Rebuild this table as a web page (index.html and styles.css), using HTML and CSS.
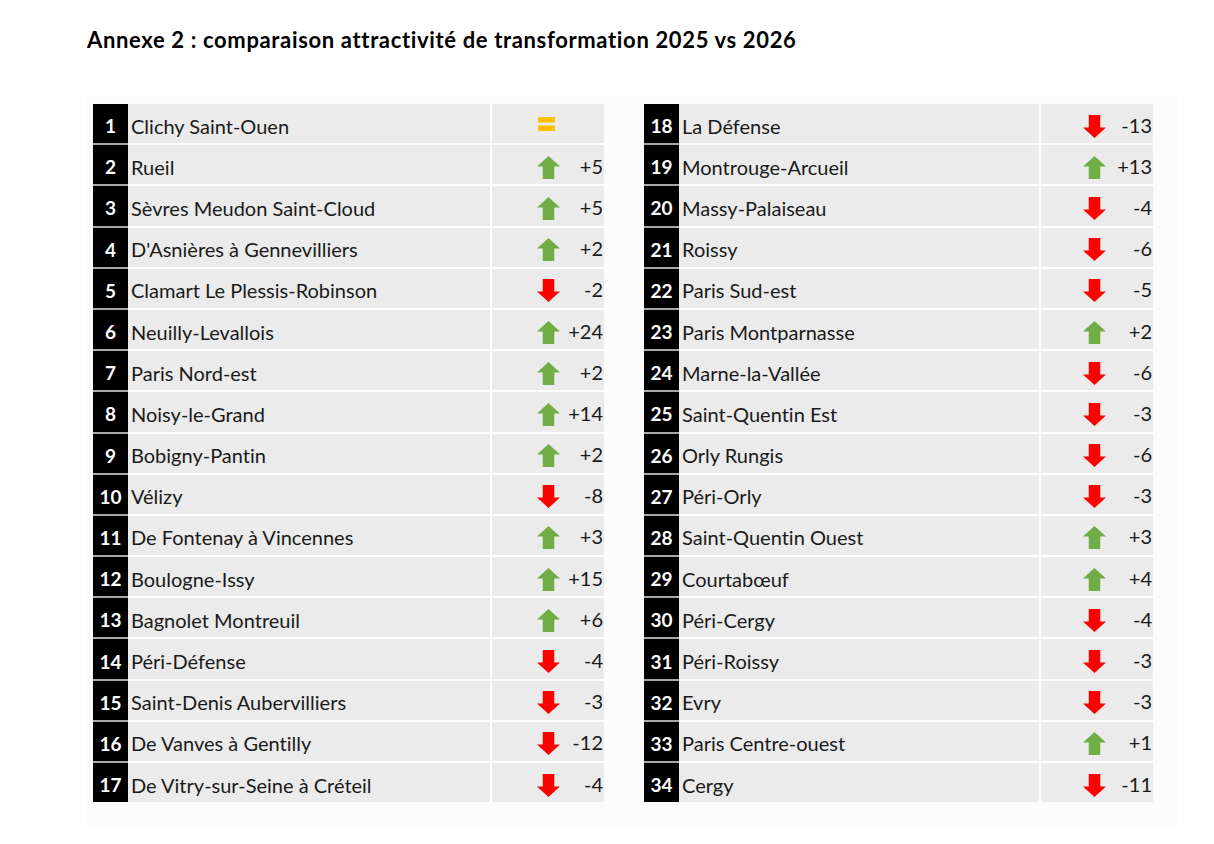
FILE: index.html
```html
<!DOCTYPE html>
<html lang="fr">
<head>
<meta charset="utf-8">
<title>Annexe 2</title>
<link rel="stylesheet" href="styles.css">
</head>
<body>
<h1 class="title">Annexe 2 : comparaison attractivité de transformation 2025 vs 2026</h1>
<svg width="0" height="0" class="defs">
  <defs>
    <symbol id="up" viewBox="0 0 24 24"><path d="M12 0 L24 11 H18 V24 H6 V11 H0 Z" fill="#70ad47"/></symbol>
    <symbol id="down" viewBox="0 0 24 24"><path d="M12 24 L24 13 H18 V0 H6 V13 H0 Z" fill="#ff0000"/></symbol>
    <symbol id="eq" viewBox="0 0 18 16"><rect x="0" y="0" width="18" height="6" fill="#ffc000"/><rect x="0" y="9" width="18" height="6" fill="#ffc000"/></symbol>
  </defs>
</svg>
<div class="panel">
  <div class="table">
    <div class="row"><div class="rank">1</div><div class="name">Clichy Saint-Ouen</div><div class="change"><svg class="eq"><use href="#eq"/></svg><span class="val"></span></div></div>
    <div class="row"><div class="rank">2</div><div class="name">Rueil</div><div class="change"><svg class="arrow"><use href="#up"/></svg><span class="val">+5</span></div></div>
    <div class="row"><div class="rank">3</div><div class="name">Sèvres Meudon Saint-Cloud</div><div class="change"><svg class="arrow"><use href="#up"/></svg><span class="val">+5</span></div></div>
    <div class="row"><div class="rank">4</div><div class="name">D'Asnières à Gennevilliers</div><div class="change"><svg class="arrow"><use href="#up"/></svg><span class="val">+2</span></div></div>
    <div class="row"><div class="rank">5</div><div class="name">Clamart Le Plessis-Robinson</div><div class="change"><svg class="arrow"><use href="#down"/></svg><span class="val">-2</span></div></div>
    <div class="row"><div class="rank">6</div><div class="name">Neuilly-Levallois</div><div class="change"><svg class="arrow"><use href="#up"/></svg><span class="val">+24</span></div></div>
    <div class="row"><div class="rank">7</div><div class="name">Paris Nord-est</div><div class="change"><svg class="arrow"><use href="#up"/></svg><span class="val">+2</span></div></div>
    <div class="row"><div class="rank">8</div><div class="name">Noisy-le-Grand</div><div class="change"><svg class="arrow"><use href="#up"/></svg><span class="val">+14</span></div></div>
    <div class="row"><div class="rank">9</div><div class="name">Bobigny-Pantin</div><div class="change"><svg class="arrow"><use href="#up"/></svg><span class="val">+2</span></div></div>
    <div class="row"><div class="rank">10</div><div class="name">Vélizy</div><div class="change"><svg class="arrow"><use href="#down"/></svg><span class="val">-8</span></div></div>
    <div class="row"><div class="rank">11</div><div class="name">De Fontenay à Vincennes</div><div class="change"><svg class="arrow"><use href="#up"/></svg><span class="val">+3</span></div></div>
    <div class="row"><div class="rank">12</div><div class="name">Boulogne-Issy</div><div class="change"><svg class="arrow"><use href="#up"/></svg><span class="val">+15</span></div></div>
    <div class="row"><div class="rank">13</div><div class="name">Bagnolet Montreuil</div><div class="change"><svg class="arrow"><use href="#up"/></svg><span class="val">+6</span></div></div>
    <div class="row"><div class="rank">14</div><div class="name">Péri-Défense</div><div class="change"><svg class="arrow"><use href="#down"/></svg><span class="val">-4</span></div></div>
    <div class="row"><div class="rank">15</div><div class="name">Saint-Denis Aubervilliers</div><div class="change"><svg class="arrow"><use href="#down"/></svg><span class="val">-3</span></div></div>
    <div class="row"><div class="rank">16</div><div class="name">De Vanves à Gentilly</div><div class="change"><svg class="arrow"><use href="#down"/></svg><span class="val">-12</span></div></div>
    <div class="row"><div class="rank">17</div><div class="name">De Vitry-sur-Seine à Créteil</div><div class="change"><svg class="arrow"><use href="#down"/></svg><span class="val">-4</span></div></div>
  </div>
  <div class="table">
    <div class="row"><div class="rank">18</div><div class="name">La Défense</div><div class="change"><svg class="arrow"><use href="#down"/></svg><span class="val">-13</span></div></div>
    <div class="row"><div class="rank">19</div><div class="name">Montrouge-Arcueil</div><div class="change"><svg class="arrow"><use href="#up"/></svg><span class="val">+13</span></div></div>
    <div class="row"><div class="rank">20</div><div class="name">Massy-Palaiseau</div><div class="change"><svg class="arrow"><use href="#down"/></svg><span class="val">-4</span></div></div>
    <div class="row"><div class="rank">21</div><div class="name">Roissy</div><div class="change"><svg class="arrow"><use href="#down"/></svg><span class="val">-6</span></div></div>
    <div class="row"><div class="rank">22</div><div class="name">Paris Sud-est</div><div class="change"><svg class="arrow"><use href="#down"/></svg><span class="val">-5</span></div></div>
    <div class="row"><div class="rank">23</div><div class="name">Paris Montparnasse</div><div class="change"><svg class="arrow"><use href="#up"/></svg><span class="val">+2</span></div></div>
    <div class="row"><div class="rank">24</div><div class="name">Marne-la-Vallée</div><div class="change"><svg class="arrow"><use href="#down"/></svg><span class="val">-6</span></div></div>
    <div class="row"><div class="rank">25</div><div class="name">Saint-Quentin Est</div><div class="change"><svg class="arrow"><use href="#down"/></svg><span class="val">-3</span></div></div>
    <div class="row"><div class="rank">26</div><div class="name">Orly Rungis</div><div class="change"><svg class="arrow"><use href="#down"/></svg><span class="val">-6</span></div></div>
    <div class="row"><div class="rank">27</div><div class="name">Péri-Orly</div><div class="change"><svg class="arrow"><use href="#down"/></svg><span class="val">-3</span></div></div>
    <div class="row"><div class="rank">28</div><div class="name">Saint-Quentin Ouest</div><div class="change"><svg class="arrow"><use href="#up"/></svg><span class="val">+3</span></div></div>
    <div class="row"><div class="rank">29</div><div class="name">Courtabœuf</div><div class="change"><svg class="arrow"><use href="#up"/></svg><span class="val">+4</span></div></div>
    <div class="row"><div class="rank">30</div><div class="name">Péri-Cergy</div><div class="change"><svg class="arrow"><use href="#down"/></svg><span class="val">-4</span></div></div>
    <div class="row"><div class="rank">31</div><div class="name">Péri-Roissy</div><div class="change"><svg class="arrow"><use href="#down"/></svg><span class="val">-3</span></div></div>
    <div class="row"><div class="rank">32</div><div class="name">Evry</div><div class="change"><svg class="arrow"><use href="#down"/></svg><span class="val">-3</span></div></div>
    <div class="row"><div class="rank">33</div><div class="name">Paris Centre-ouest</div><div class="change"><svg class="arrow"><use href="#up"/></svg><span class="val">+1</span></div></div>
    <div class="row"><div class="rank">34</div><div class="name">Cergy</div><div class="change"><svg class="arrow"><use href="#down"/></svg><span class="val">-11</span></div></div>
  </div>
</div>
</body>
</html>
```
FILE: styles.css
```css
html, body {
  margin: 0;
  padding: 0;
  background: #ffffff;
}
body {
  font-family: Lato, "Open Sans", "Liberation Sans", sans-serif;
  font-variant-ligatures: none;
  color: #1a1a1a;
  width: 1214px;
  height: 844px;
  overflow: hidden;
}
.defs {
  position: absolute;
  width: 0;
  height: 0;
}
.title {
  margin: 0;
  padding: 26px 0 0 87px;
  font-size: 22px;
  line-height: 28px;
  letter-spacing: 0.65px;
  font-weight: 700;
  color: #000;
}
.panel {
  margin: 42px 0 0 87px;
  width: 1090px;
  box-sizing: border-box;
  padding: 8px 24px 24px 6px;
  background: #fcfcfc;
  display: flex;
  gap: 40px;
}
.table {
  width: 511px;
  display: flex;
  flex-direction: column;
  gap: 2px;
  background: linear-gradient(to right, #a8a8a8 0 35px, #ffffff 35px);
}
.table + .table {
  width: 509px;
}
.row {
  height: 39.2px;
  display: grid;
  grid-template-columns: 35px 1fr 112px;
}
.rank {
  background: #000;
  color: #fff;
  font-weight: 700;
  font-size: 19px;
  font-variant-numeric: tabular-nums;
  display: flex;
  align-items: center;
  justify-content: center;
  padding-top: 4px;
  box-sizing: border-box;
}
.name {
  background: #ebebeb;
  font-size: 20px;
  display: flex;
  align-items: center;
  padding: 4px 0 0 3px;
  margin-right: 2px;
}
.change {
  background: #ebebeb;
  display: grid;
  grid-template-columns: 1fr 44px;
  align-items: center;
  font-size: 20px;
  padding-top: 5px;
}
.table + .table .change {
  grid-template-columns: 1fr 47px;
}
.arrow {
  width: 23px;
  height: 23px;
  justify-self: end;
}
.eq {
  width: 17px;
  height: 15px;
  justify-self: end;
  margin-right: 5px;
  margin-top: -3px;
}
.val {
  text-align: right;
  padding-right: 1px;
  margin-top: -3px;
}
```
